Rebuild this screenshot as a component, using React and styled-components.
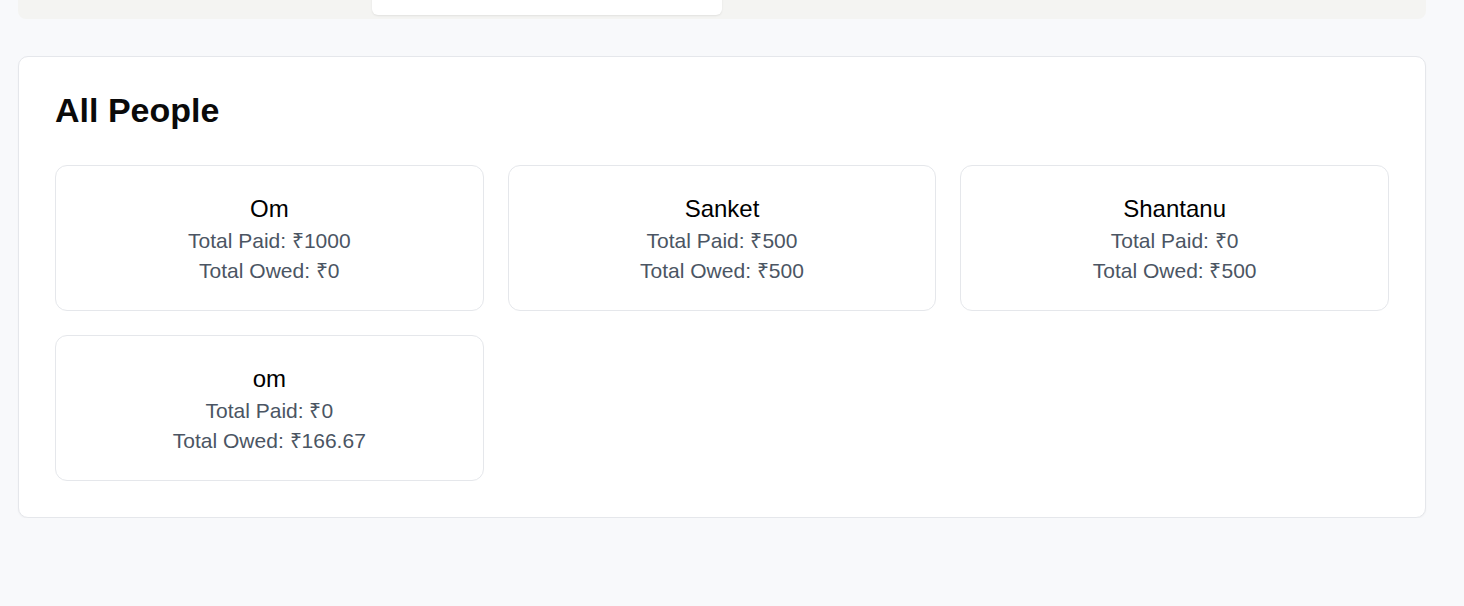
import styled, { createGlobalStyle } from 'styled-components';

const GlobalStyle = createGlobalStyle`
  html, body {
    margin: 0;
    padding: 0;
    background-color: #f8f9fb;
    font-family: "Liberation Sans", Arial, sans-serif;
    overflow: hidden;
  }
`

const Page = styled.div`
  padding: 0 38px 0 18px;
  display: flex;
  flex-direction: column;
  gap: 37px;
`

const TabBar = styled.div`
  margin-top: -29px;
  height: 48px;
  padding: 4px;
  box-sizing: border-box;
  background-color: #f4f4f2;
  border-radius: 8px;
  display: grid;
  grid-template-columns: repeat(4, 1fr);
`

const Tab = styled.div`
  display: flex;
  align-items: flex-start;
  justify-content: center;
  padding-top: 8px;
  font-size: 15px;
  color: ${props => (props.$active ? '#0a0a0a' : '#6b7280')};
  background-color: ${props => (props.$active ? '#ffffff' : 'transparent')};
  border-radius: 6px;
  box-shadow: ${props => (props.$active ? '0 1px 2px rgba(0, 0, 0, 0.08)' : 'none')};
`

const Panel = styled.section`
  background-color: #ffffff;
  border: 1px solid #e5e7eb;
  border-radius: 10px;
  box-shadow: 0 1px 2px rgba(0, 0, 0, 0.04);
  padding: 32px 36px 36px;
`

const Title = styled.h2`
  margin: 0 0 36px;
  padding-top: 3px;
  font-size: 34px;
  line-height: 37px;
  font-weight: 700;
  color: #0a0a0a;
`

const PeopleGrid = styled.div`
  display: grid;
  grid-template-columns: repeat(3, 1fr);
  gap: 24px;
`

const PersonCard = styled.div`
  border: 1px solid #e5e7eb;
  border-radius: 12px;
  padding: 26px 16px 24px;
  display: flex;
  flex-direction: column;
  align-items: center;
`

const Name = styled.div`
  font-size: 24px;
  line-height: 34px;
  color: #000000;
`

const Stat = styled.div`
  font-size: 21px;
  line-height: 30px;
  color: #4b5563;
`

const tabs = ['Add Person', 'Add Expense', 'Balances', 'Settle Up']

const people = [
  { id: 1, name: 'Om', paid: '1000', owed: '0' },
  { id: 2, name: 'Sanket', paid: '500', owed: '500' },
  { id: 3, name: 'Shantanu', paid: '0', owed: '500' },
  { id: 4, name: 'om', paid: '0', owed: '166.67' },
]

function App() {
  return (
    <>
      <GlobalStyle />
      <Page>
        <TabBar>
          {tabs.map((tab, i) => (
            <Tab key={tab} $active={i === 1}>{tab}</Tab>
          ))}
        </TabBar>
        <Panel>
          <Title>All People</Title>
          <PeopleGrid>
            {people.map(person => (
              <PersonCard key={person.id}>
                <Name>{person.name}</Name>
                <Stat>Total Paid: ₹{person.paid}</Stat>
                <Stat>Total Owed: ₹{person.owed}</Stat>
              </PersonCard>
            ))}
          </PeopleGrid>
        </Panel>
      </Page>
    </>
  );
}

export default App;
